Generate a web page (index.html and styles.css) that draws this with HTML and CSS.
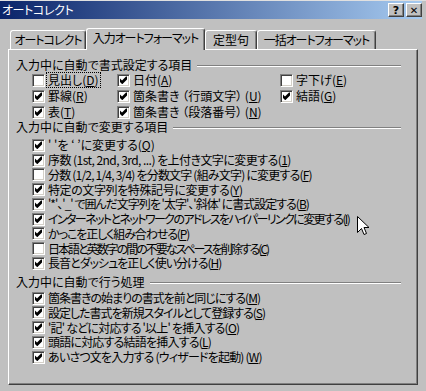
FILE: index.html
```
<!DOCTYPE html>
<html lang="ja">
<head>
    <meta charset="UTF-8">
    <title>オートコレクト</title>
    <link rel="stylesheet" href="styles.css">
</head>
<body>
    <div class="window">
        <div class="titlebar">
            <span class="title">オートコレクト</span>
            <span class="tbtn">?</span>
            <span class="tbtn close">✕</span>
        </div>

        <div class="tabs">
            <div class="tab t1">オートコレクト</div>
            <div class="tab t2 active">入力オートフォーマット</div>
            <div class="tab t3">定型句</div>
            <div class="tab t4">一括オートフォーマット</div>
        </div>

        <div class="panel">
            <div class="group-title">入力中に自動で書式設定する項目</div>
            <div class="grid">
                <label class="row"><span class="cb"></span><span class="focus">見出し(<u>D</u>)</span></label>
                <label class="row"><span class="cb on"></span><span>日付(<u>A</u>)</span></label>
                <label class="row"><span class="cb"></span><span>字下げ(<u>E</u>)</span></label>
                <label class="row"><span class="cb on"></span><span>罫線(<u>R</u>)</span></label>
                <label class="row"><span class="cb on"></span><span>箇条書き （行頭文字） (<u>U</u>)</span></label>
                <label class="row"><span class="cb on"></span><span>結語(<u>G</u>)</span></label>
                <label class="row"><span class="cb on"></span><span>表(<u>T</u>)</span></label>
                <label class="row"><span class="cb on"></span><span>箇条書き （段落番号） (<u>N</u>)</span></label>
            </div>

            <div class="group-title">入力中に自動で変更する項目</div>
            <div class="list list-change">
                <label class="row"><span class="cb on"></span><span class="ls-0">' 'を ‘ ’に変更する(<u>Q</u>)</span></label>
                <label class="row"><span class="cb on"></span><span class="ls-5">序数 (1st, 2nd, 3rd, ...) を上付き文字に変更する(<u>1</u>)</span></label>
                <label class="row"><span class="cb"></span><span>分数 (1/2, 1/4, 3/4) を分数文字 (組み文字) に変更する(<u>F</u>)</span></label>
                <label class="row"><span class="cb on"></span><span class="ls-4">特定の文字列を特殊記号に変更する(<u>Y</u>)</span></label>
                <label class="row"><span class="cb on"></span><span class="ls-10">'*'、'_' で囲んだ文字列を '太字'、'斜体' に書式設定する(<u>B</u>)</span></label>
                <label class="row"><span class="cb on"></span><span class="ls-16">インターネットとネットワークのアドレスをハイパーリンクに変更する(<u>I</u>)</span></label>
                <label class="row"><span class="cb on"></span><span class="ls-11">かっこを正しく組み合わせる(<u>P</u>)</span></label>
                <label class="row"><span class="cb"></span><span class="ls-20">日本語と英数字の間の不要なスペースを削除する(<u>C</u>)</span></label>
                <label class="row"><span class="cb on"></span><span class="ls-10">長音とダッシュを正しく使い分ける(<u>H</u>)</span></label>
            </div>

            <div class="group-title">入力中に自動で行う処理</div>
            <div class="list list-do">
                <label class="row"><span class="cb on"></span><span class="ls-10">箇条書きの始まりの書式を前と同じにする(<u>M</u>)</span></label>
                <label class="row"><span class="cb on"></span><span class="ls-10">設定した書式を新規スタイルとして登録する(<u>S</u>)</span></label>
                <label class="row"><span class="cb on"></span><span>'記' などに対応する '以上' を挿入する(<u>O</u>)</span></label>
                <label class="row"><span class="cb on"></span><span>頭語に対応する結語を挿入する(<u>L</u>)</span></label>
                <label class="row"><span class="cb on"></span><span>あいさつ文を入力する (ウィザードを起動) (<u>W</u>)</span></label>
            </div>
        </div>

        <!-- mouse pointer -->
        <svg class="cursor" width="13" height="20" viewBox="0 0 13 20">
            <path d="M0.5 0.5 V16.5 L4.5 12.5 L7 18.5 L9.5 17.5 L7 11.5 H12 Z" fill="#fff" stroke="#000" stroke-width="1"/>
        </svg>
    </div>
</body>
</html>
```

FILE: styles.css
```
body {
    margin: 0;
    background: #c0c0c0;
    font-family: "Noto Sans CJK JP", sans-serif;
    font-size: 12px;
    font-feature-settings: "palt";
    color: #000;
}

.window {
    position: relative;
    width: 426px;
    height: 391px;
    overflow: hidden;
    border-top: 1px solid #e0e0e0;
    box-sizing: border-box;
}

.titlebar {
    width: 420px;
    height: 18px;
    padding-left: 2px;
    background: linear-gradient(to right, #0a246a, #a6caf0);
    display: flex;
    align-items: center;
}

.title {
    flex: 1;
    color: #fff;
    line-height: 18px;
    letter-spacing: -0.4px;
}

.tbtn {
    width: 16px;
    height: 14px;
    box-sizing: border-box;
    margin-left: 2px;
    background: #c0c0c0;
    border: 1px solid;
    border-color: #fff #404040 #404040 #fff;
    box-shadow: inset -1px -1px #808080;
    font: bold 11px "DejaVu Sans", sans-serif;
    display: flex;
    align-items: center;
    justify-content: center;
}

.tbtn.close {
    font-size: 10px;
}

.tabs {
    display: flex;
    align-items: flex-end;
    height: 21px;
    margin-top: 9px;
    padding-left: 10px;
}

.tab {
    height: 19px;
    box-sizing: border-box;
    border-top: 1px solid #fff;
    border-left: 1px solid #fff;
    border-right: 1px solid #404040;
    box-shadow: inset -1px 0 #808080;
    border-radius: 3px 3px 0 0;
    text-align: center;
    line-height: 18px;
    letter-spacing: -1px;
    white-space: nowrap;
}

.tab.active {
    position: relative;
    z-index: 1;
    height: 22px;
    margin-bottom: -1px;
    background: #c0c0c0;
}

.t1 { width: 76px; }
.t2 { width: 119px; }
.t3 { width: 52px; letter-spacing: 0; }
.t4 { width: 119px; }

.panel {
    width: 410px;
    height: 336px;
    margin-left: 8px;
    box-sizing: border-box;
    border: 1px solid;
    border-color: #fff #404040 #404040 #fff;
    box-shadow: inset -1px -1px #808080;
    padding: 8px 16px 0 7px;
}

.group-title {
    display: flex;
    align-items: center;
    height: 14px;
    line-height: 14px;
}

.group-title::after {
    content: "";
    flex: 1;
    height: 0;
    margin: 2px 0 0 5px;
    border-top: 1px solid #808080;
    border-bottom: 1px solid #fff;
}

.grid {
    display: grid;
    grid-template-columns: 85px 163px 1fr;
    grid-auto-rows: 16px;
    padding-left: 16px;
}

.list {
    padding-left: 16px;
}

.list-change {
    margin: 4px 0 4px;
}

.list-do {
    margin-top: 2px;
}

.list .row {
    height: 14.75px;
    letter-spacing: -0.8px;
}

.list .ls-0 { letter-spacing: 0; }
.list .ls-4 { letter-spacing: -0.4px; }
.list .ls-5 { letter-spacing: -0.55px; }
.list .ls-10 { letter-spacing: -1px; }
.list .ls-11 { letter-spacing: -1.1px; }
.list .ls-16 { letter-spacing: -1.6px; }
.list .ls-20 { letter-spacing: -2px; }

.row {
    display: flex;
    align-items: center;
    gap: 3px;
    line-height: 14px;
    white-space: nowrap;
}

.cb {
    flex: none;
    width: 13px;
    height: 13px;
    box-sizing: border-box;
    background: #fff;
    border: 1px solid;
    border-color: #808080 #fff #fff #808080;
    box-shadow: inset 1px 1px #404040, inset -1px -1px #d4d0c8;
}

.cb.on {
    background: #fff url("data:image/svg+xml,%3Csvg xmlns='http://www.w3.org/2000/svg' width='9' height='9' viewBox='0 0 9 9'%3E%3Cpath d='M1 2.5 L3 4.5 L7 0.5 H8 V3.5 L3.5 8 H3 L1 6 Z' fill='%23000'/%3E%3C/svg%3E") no-repeat 1px 1px;
}

.focus {
    margin-left: -2px;
    padding: 0 1px;
    border: 1px dotted #000;
}

u {
    text-decoration-thickness: 1px;
    text-underline-offset: 1px;
}

.cursor {
    position: absolute;
    left: 357px;
    top: 215px;
}
```
